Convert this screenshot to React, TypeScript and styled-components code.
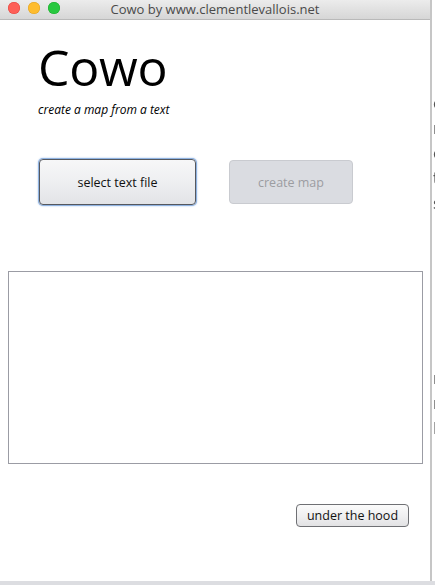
import React from "react";
import styled, { createGlobalStyle } from "styled-components";

const Global = createGlobalStyle`
  html, body { margin: 0; padding: 0; }
  body {
    width: 435px;
    height: 585px;
    overflow: hidden;
    background: #ffffff;
    font-family: "Open Sans", "DejaVu Sans", sans-serif;
  }
`;

const Screen = styled.div`
  display: flex;
  flex-direction: column;
  width: 435px;
  height: 585px;
`;

const TopRow = styled.div`
  display: flex;
  height: 581px;
`;

const Window = styled.div`
  width: 430px;
  display: flex;
  flex-direction: column;
  background: #ffffff;
`;

const Edge = styled.div`
  width: 2px;
  background: #c6c6c6;
`;

const Outside = styled.div<{ $top: number }>`
  width: 3px;
  overflow: hidden;
  display: flex;
  flex-direction: column;
  padding-top: ${(p) => p.$top}px;
  background: #ffffff;
  filter: grayscale(1);
`;

const OutsideGroup = styled.div<{ $gap: number }>`
  display: flex;
  flex-direction: column;
  margin-bottom: ${(p) => p.$gap}px;
`;

const OutsideLetter = styled.span`
  display: block;
  height: 25px;
  line-height: 25px;
  font-family: "DejaVu Sans", sans-serif;
  font-size: 15px;
  color: #555;
  margin-left: 1px;
  white-space: nowrap;
`;

const BottomStrip = styled.div`
  height: 4px;
  background: #dcdde1;
`;

const TitleBar = styled.div`
  height: 19px;
  border-bottom: 1px solid #b9b9b9;
  background: linear-gradient(#ececec, #d6d6d6);
  display: flex;
  align-items: center;
  position: relative;
`;

const Lights = styled.div`
  position: absolute;
  left: 8px;
  top: 2px;
  display: flex;
  gap: 8px;
`;

const Light = styled.span<{ $c: string; $b: string }>`
  width: 12px;
  height: 12px;
  border-radius: 50%;
  background: ${(p) => p.$c};
  box-shadow: inset 0 0 0 0.5px ${(p) => p.$b};
`;

const Title = styled.div`
  flex: 1;
  text-align: center;
  font-size: 13px;
  color: #4a4a4a;
  line-height: 19px;
`;

const Content = styled.div`
  flex: 1;
  display: flex;
  flex-direction: column;
`;

const Header = styled.div`
  padding: 21px 0 0 38px;
  display: flex;
  flex-direction: column;
`;

const AppName = styled.h1`
  margin: 0;
  font-weight: 400;
  font-size: 50px;
  line-height: 52px;
  color: #000;
  letter-spacing: -0.3px;
`;

const Tagline = styled.p`
  margin: 9px 0 0 0;
  font-style: italic;
  font-size: 12px;
  line-height: 16px;
  color: #000;
`;

const ButtonRow = styled.div`
  display: flex;
  gap: 33px;
  padding-left: 39px;
  margin-top: 41px;
  align-items: center;
`;

const BigButton = styled.button<{ $disabled?: boolean; $focus?: boolean }>`
  height: ${(p) => (p.$disabled ? 44 : 46)}px;
  width: ${(p) => (p.$disabled ? 124 : 157)}px;
  border-radius: 4px;
  font-family: "Open Sans", "DejaVu Sans", sans-serif;
  font-size: 12.5px;
  padding: 0;
  color: ${(p) => (p.$disabled ? "#9c9da1" : "#111")};
  border: 1px solid ${(p) => (p.$disabled ? "#c9cbd0" : "#55585f")};
  background: ${(p) =>
    p.$disabled
      ? "#dadce1"
      : "linear-gradient(#f7f7f8 0%, #eeeff1 50%, #e3e4e7 100%)"};
  box-shadow: ${(p) =>
    p.$focus ? "0 0 0 1px #8fb2e0, 0 0 2px 1px #a9c6ec" : "none"};
`;

const TextPanel = styled.div`
  margin: 66px 0 0 8px;
  width: 413px;
  height: 191px;
  border: 1px solid #9b9ca4;
  background: #fff;
`;

const Footer = styled.div`
  display: flex;
  justify-content: flex-end;
  padding-right: 21px;
  margin-top: 40px;
`;

const SmallButton = styled.button`
  width: 113px;
  height: 23px;
  padding: 0;
  border-radius: 4px;
  border: 1px solid #6f7074;
  background: linear-gradient(#fbfbfb 0%, #efeff0 55%, #e2e2e4 100%);
  font-family: "Open Sans", "DejaVu Sans", sans-serif;
  font-size: 12.5px;
  color: #111;
`;

export default function App() {
  return (
    <>
      <Global />
      <Screen>
        <TopRow>
          <Window>
            <TitleBar>
              <Lights>
                <Light $c="#fe5f57" $b="#e0443e" />
                <Light $c="#febc2e" $b="#dea123" />
                <Light $c="#28c840" $b="#1aab29" />
              </Lights>
              <Title>Cowo by www.clementlevallois.net</Title>
            </TitleBar>
            <Content>
              <Header>
                <AppName>Cowo</AppName>
                <Tagline>create a map from a text</Tagline>
              </Header>
              <ButtonRow>
                <BigButton $focus>select text file</BigButton>
                <BigButton $disabled disabled>
                  create map
                </BigButton>
              </ButtonRow>
              <TextPanel />
              <Footer>
                <SmallButton>under the hood</SmallButton>
              </Footer>
            </Content>
          </Window>
          <Edge />
          <Outside $top={92}>
            <OutsideGroup $gap={150}>
              {["c", "r", "c", "t", "s"].map((l, i) => (
                <OutsideLetter key={i}>{l}</OutsideLetter>
              ))}
            </OutsideGroup>
            <OutsideGroup $gap={0}>
              {["n", "r", "I"].map((l, i) => (
                <OutsideLetter key={i}>{l}</OutsideLetter>
              ))}
            </OutsideGroup>
          </Outside>
        </TopRow>
        <BottomStrip />
      </Screen>
    </>
  );
}
